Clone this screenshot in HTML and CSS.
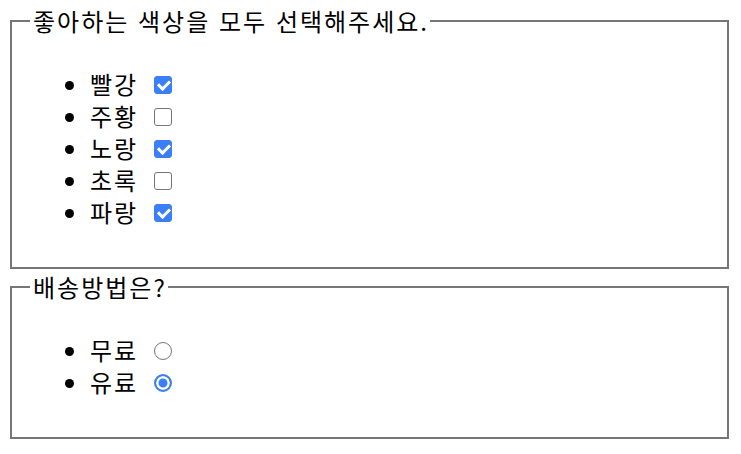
FILE: index.html
```html
<!DOCTYPE html>
<html lang="ko">
<head>
<meta charset="utf-8">
<title>설문</title>
<link rel="stylesheet" href="styles.css">
</head>
<body>
<fieldset class="group">
  <legend class="group-title">좋아하는 색상을 모두 선택해주세요.</legend>
  <ul class="options">
    <li class="option">빨강<input class="box" type="checkbox" checked></li>
    <li class="option">주황<input class="box" type="checkbox"></li>
    <li class="option">노랑<input class="box" type="checkbox" checked></li>
    <li class="option">초록<input class="box" type="checkbox"></li>
    <li class="option">파랑<input class="box" type="checkbox" checked></li>
  </ul>
</fieldset>
<fieldset class="group group-second">
  <legend class="group-title">배송방법은?</legend>
  <ul class="options">
    <li class="option">무료<input class="dot" type="radio" name="ship"></li>
    <li class="option">유료<input class="dot" type="radio" name="ship" checked></li>
  </ul>
</fieldset>
</body>
</html>
```
FILE: styles.css
```css
html, body {
  background: #ffffff;
}
body {
  margin: 8px 12px 8px 10px;
  font-family: "Noto Sans CJK KR", "Noto Sans", sans-serif;
  font-size: 24px;
  letter-spacing: 2px;
  color: #000000;
}
.group {
  margin: 0;
  padding: 10px 18px 15px 18px;
  border: 2px solid #767676;
}
.group-second {
  margin-top: 5px;
}
.group-title {
  padding: 0 1px 0 3px;
  line-height: 26px;
}
.options {
  margin: 24px 0;
  padding-left: 60px;
  list-style: disc;
}
.option {
  line-height: 32px;
}
.box, .dot {
  -webkit-appearance: none;
  appearance: none;
  box-sizing: border-box;
  width: 18px;
  height: 18px;
  margin: 0 0 0 16px;
  vertical-align: 0;
  position: relative;
  background: #ffffff;
}
.box {
  border: 1.5px solid #767676;
  border-radius: 3px;
}
.box:checked {
  background: #3b7ff5;
  border-color: #3b7ff5;
}
.box:checked::after {
  content: "";
  position: absolute;
  left: 5px;
  top: 1px;
  width: 5px;
  height: 9px;
  border: solid #ffffff;
  border-width: 0 3px 3px 0;
  transform: rotate(45deg);
}
.dot {
  border: 1.5px solid #767676;
  border-radius: 50%;
}
.dot:checked {
  border: 2px solid #3b7ff5;
  box-shadow: inset 0 0 0 2.5px #ffffff;
  background: #3b7ff5;
}
```
